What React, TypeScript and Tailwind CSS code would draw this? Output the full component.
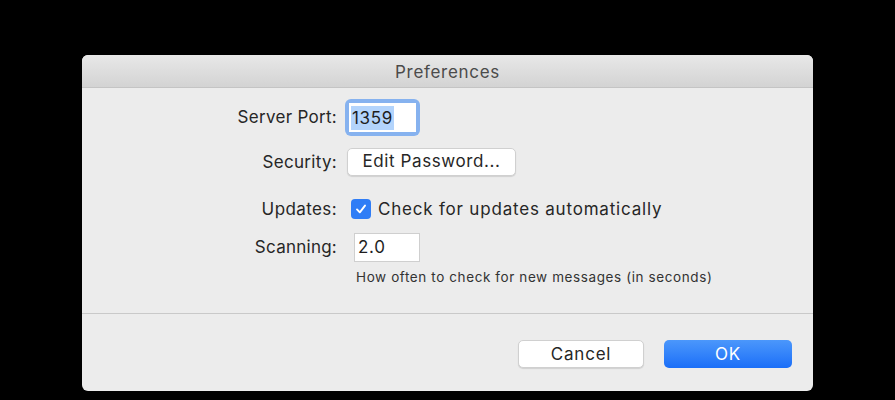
import React from "react";

export default function App() {
  const font = { fontFamily: "Inter, 'Liberation Sans', sans-serif" };
  return (
    <div className="w-[895px] h-[400px] bg-black overflow-hidden" style={font}>
      <div className="ml-[82px] mt-[55px] w-[731px] h-[336px] rounded-[6px] bg-[#ececec] overflow-hidden flex flex-col shadow-[0_0_0_1px_rgba(0,0,0,0.4)]">
        {/* Title bar */}
        <div className="h-[33px] shrink-0 pt-[3px] bg-gradient-to-b from-[#e8e8e8] to-[#d3d3d3] border-b border-[#c4c4c4] flex items-center justify-center">
          <span className="text-[17px] tracking-[0.7px] text-[#4b4b4b]">Preferences</span>
        </div>

        {/* Server Port */}
        <div className="mt-[11px] h-[37px] flex items-center">
          <div className="w-[255px] text-right text-[17px] tracking-[0.3px] text-[#262626] pt-[1px]">Server Port:</div>
          <div className="ml-[8px] w-[75px] h-[37px] rounded-[6px] bg-[#86b2ef] p-[4px]">
            <div className="w-full h-full bg-white flex items-center pl-[2px]">
              <span className="bg-[#b3d4fc] text-[17px] tracking-[0.7px] text-[#1e1e1e] leading-[24px] px-[1px]">1359</span>
            </div>
          </div>
        </div>

        {/* Security */}
        <div className="mt-[12px] h-[28px] flex items-center">
          <div className="w-[255px] text-right text-[17px] tracking-[0.3px] text-[#262626] pt-[1px]">Security:</div>
          <button className="ml-[10px] w-[169px] h-[28px] rounded-[5px] bg-white border border-[#d0d0d0] shadow-[0_1px_1px_rgba(0,0,0,0.12)] text-[17px] tracking-[0.6px] text-[#262626] flex items-center justify-center">
            Edit Password...
          </button>
        </div>

        {/* Updates */}
        <div className="mt-[21px] h-[24px] flex items-center">
          <div className="w-[255px] text-right text-[17px] tracking-[0.4px] text-[#262626] pt-[1px]">Updates:</div>
          <div className="ml-[14px] w-[20px] h-[20px] rounded-[4px] bg-[#2f7df6] flex items-center justify-center">
            <svg width="14" height="14" viewBox="0 0 14 14" fill="none">
              <path d="M3 7.4 L5.8 10.3 L11 3.6" stroke="white" strokeWidth="1.9" strokeLinecap="round" strokeLinejoin="round" />
            </svg>
          </div>
          <span className="ml-[7px] text-[17px] tracking-[0.8px] text-[#262626] pt-[1px]">Check for updates automatically</span>
        </div>

        {/* Scanning */}
        <div className="mt-[12px] h-[29px] flex items-center">
          <div className="w-[255px] text-right text-[17px] tracking-[0.25px] text-[#262626] pt-[1px]">Scanning:</div>
          <div className="ml-[17px] w-[66px] h-[29px] bg-white border border-[#cfcfcf] flex items-center pl-[3px]">
            <span className="text-[17px] tracking-[0.7px] text-[#1e1e1e] pt-[1px]">2.0</span>
          </div>
        </div>

        {/* Help */}
        <div className="mt-[7px] h-[16px] flex items-center pl-[274px]">
          <span className="text-[13.5px] tracking-[0.6px] text-[#333333]">How often to check for new messages (in seconds)</span>
        </div>

        {/* Separator */}
        <div className="mt-[28px] h-px bg-[#c9c9c9]" />

        {/* Buttons */}
        <div className="mt-[26px] flex justify-end pr-[21px] gap-[20px]">
          <button className="w-[126px] h-[28px] rounded-[5px] bg-white border border-[#d0d0d0] shadow-[0_1px_1px_rgba(0,0,0,0.12)] text-[17px] tracking-[0.8px] text-[#262626] flex items-center justify-center pt-[1px]">
            Cancel
          </button>
          <button className="w-[128px] h-[28px] rounded-[5px] bg-gradient-to-b from-[#4b97fb] to-[#1a6ef8] text-[17px] tracking-[0.8px] text-white flex items-center justify-center pt-[1px]">
            OK
          </button>
        </div>
      </div>
    </div>
  );
}
